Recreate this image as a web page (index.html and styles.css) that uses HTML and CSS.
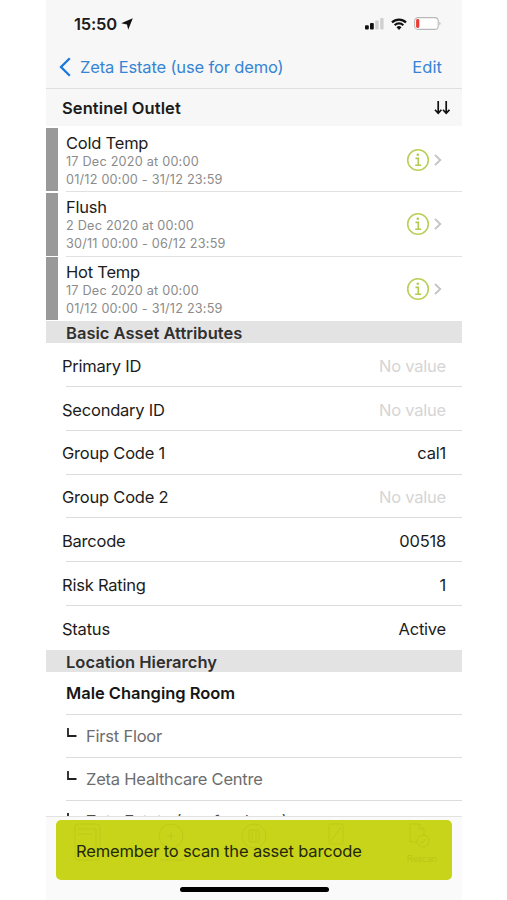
FILE: index.html
```html
<!DOCTYPE html>
<html lang="en">
<head>
<meta charset="utf-8">
<meta name="viewport" content="width=device-width">
<title>Sentinel Outlet</title>
<link rel="stylesheet" href="styles.css">
</head>
<body>
<svg class="defs" aria-hidden="true">
  <symbol id="info" viewBox="0 0 24 24"><circle cx="12" cy="12" r="10.3" fill="none" stroke="#b9d05a" stroke-width="1.6"/><circle cx="11.8" cy="6.8" r="1.3" fill="#b2ca50"/><path d="M9.5 10.4h2.8v6.7M9.2 17.2h6" fill="none" stroke="#b2ca50" stroke-width="1.6"/></symbol>
  <symbol id="chevron" viewBox="0 0 8 12"><path d="M1 1l5.3 5L1 11" fill="none" stroke="#c4c4c6" stroke-width="1.8"/></symbol>
  <symbol id="branch" viewBox="0 0 10 10"><path d="M1 0v8H9.5" fill="none" stroke="#222" stroke-width="1.8"/></symbol>
</svg>
<main class="phone">
  <header class="top">
    <div class="status">
      <span class="clock">15:50</span>
      <svg class="locate" viewBox="0 0 12 12"><path d="M11.8.2L7.2 11.8 6 6.4.2 5.2z" fill="#111"/></svg>
      <div class="signals">
        <svg width="19" height="13" viewBox="0 0 19 13"><rect x="0" y="8.2" width="3.8" height="4.3" rx="1" fill="#111"/><rect x="5" y="6" width="3.8" height="6.5" rx="1" fill="#111"/><rect x="10.2" y="3.4" width="3.4" height="9.1" rx="1" fill="#d0d0d0"/><rect x="15.2" y="1" width="3.4" height="11.5" rx="1" fill="#d0d0d0"/></svg>
        <svg width="16" height="12" viewBox="0 0 16 12"><path d="M1 4.4a10 10 0 0 1 14 0M3.7 7.2a6.2 6.2 0 0 1 8.6 0" fill="none" stroke="#111" stroke-width="2.2"/><path d="M5.5 9.3a3.6 3.6 0 0 1 5 0L8 12z" fill="#111"/></svg>
        <svg width="27" height="13" viewBox="0 0 27 13"><rect x=".6" y=".6" width="23.6" height="11.8" rx="3.4" fill="#fff" stroke="#b9b9b9" stroke-width="1.1"/><rect x="2.1" y="2" width="3.2" height="9" rx="1.4" fill="#ee3b32"/><path d="M25.5 4.4q1.8 2.1 0 4.2z" fill="#aaa"/></svg>
      </div>
    </div>
    <nav class="nav">
      <svg class="back" viewBox="0 0 12 20"><path d="M10.8 1.2L2 10l8.8 8.8" fill="none" stroke="#1878dd" stroke-width="2.3"/></svg>
      <span class="crumb">Zeta Estate (use for demo)</span>
      <span class="edit">Edit</span>
    </nav>
  </header>
  <div class="title">
    <h1>Sentinel Outlet</h1>
    <svg class="sort" viewBox="0 0 16 14"><path d="M4.2 0v12M1 8.8l3.2 3.5 3.2-3.5M12.2 0v12M9 8.8l3.2 3.5 3.2-3.5" fill="none" stroke="#111" stroke-width="1.7"/></svg>
  </div>
  <section class="tasks">
    <article class="task"><div class="task-body"><div class="task-text"><h2>Cold Temp</h2><p>17 Dec 2020 at 00:00</p><p>01/12 00:00 - 31/12 23:59</p></div><svg class="info"><use href="#info"/></svg><svg class="chev"><use href="#chevron"/></svg></div></article>
    <article class="task"><div class="task-body"><div class="task-text"><h2>Flush</h2><p>2 Dec 2020 at 00:00</p><p>30/11 00:00 - 06/12 23:59</p></div><svg class="info"><use href="#info"/></svg><svg class="chev"><use href="#chevron"/></svg></div></article>
    <article class="task"><div class="task-body"><div class="task-text"><h2>Hot Temp</h2><p>17 Dec 2020 at 00:00</p><p>01/12 00:00 - 31/12 23:59</p></div><svg class="info"><use href="#info"/></svg><svg class="chev"><use href="#chevron"/></svg></div></article>
  </section>
  <h3 class="section">Basic Asset Attributes</h3>
  <dl class="attrs">
    <div class="attr"><dt>Primary ID</dt><dd class="empty">No value</dd></div>
    <div class="attr"><dt>Secondary ID</dt><dd class="empty">No value</dd></div>
    <div class="attr"><dt>Group Code 1</dt><dd>cal1</dd></div>
    <div class="attr"><dt>Group Code 2</dt><dd class="empty">No value</dd></div>
    <div class="attr"><dt>Barcode</dt><dd>00518</dd></div>
    <div class="attr"><dt>Risk Rating</dt><dd>1</dd></div>
    <div class="attr"><dt>Status</dt><dd>Active</dd></div>
  </dl>
  <h3 class="section location">Location Hierarchy</h3>
  <div class="places">
    <div class="place current">Male Changing Room</div>
    <div class="place"><svg class="branch"><use href="#branch"/></svg>First Floor</div>
    <div class="place"><svg class="branch"><use href="#branch"/></svg>Zeta Healthcare Centre</div>
    <div class="place"><svg class="branch"><use href="#branch"/></svg>Zeta Estate (use for demo)</div>
  </div>
  <footer class="dock">
    <div class="toast">
      <svg class="ghosts" viewBox="0 0 396 60" fill="none" stroke="#a5b016" stroke-opacity=".3"><rect x="19" y="4" width="25" height="36" rx="3"/><path d="M22 9h18v18M22 14h14"/><circle cx="115" cy="16" r="12"/><path d="M111 16h8M115 12v8M104 40h24"/><circle cx="198" cy="16" r="12"/><path d="M193 10h10v12h-10zM196 10v12M200 10v12"/><rect x="273" y="4" width="14" height="20" rx="2"/><path d="M275 21l10-14"/><path d="M354 22V4h9l5 5v7M354 22h7M363 4v5h5"/><circle cx="367" cy="21" r="6"/><path d="M364 21l2 2 4-4"/></svg>
      <span class="rescan">Rescan</span>
      <span class="message">Remember to scan the asset barcode</span>
    </div>
    <div class="home"></div>
  </footer>
</main>
</body>
</html>
```

FILE: styles.css
```css
* { box-sizing: border-box; }
body { margin: 0; background: #fff; font-family: Inter, "Liberation Sans", sans-serif; font-size: 16.5px; letter-spacing: -0.22px; color: #1c1c1c; }
h1, h2, h3, p, dl, dd { margin: 0; }
svg { display: block; flex: none; }
.defs { position: absolute; width: 0; height: 0; }
.phone { position: relative; width: 416px; height: 900px; margin-left: 46px; overflow: hidden; white-space: nowrap; }
.top { height: 89px; background: #f7f7f7; border-bottom: 1px solid #dfdfdf; }
.status { height: 45px; display: flex; align-items: center; padding: 2px 21px 0 28px; }
.clock { font-size: 16.5px; font-weight: 600; letter-spacing: -0.2px; }
.locate { width: 12px; height: 12px; margin-left: 4px; }
.signals { margin-left: auto; display: flex; align-items: center; gap: 7px; }
.nav { height: 43px; display: flex; align-items: center; padding: 0 20px 0 13px; color: #3684d4; letter-spacing: -0.15px; }
.back { width: 12px; height: 20px; margin-right: 9px; }
.edit { margin-left: auto; letter-spacing: 0.1px; }
.title { height: 37px; display: flex; align-items: center; justify-content: space-between; padding: 0 12px 0 16px; background: #f7f7f7; }
.title h1 { font-size: 16.5px; font-weight: 600; letter-spacing: 0.08px; }
.sort { width: 16px; height: 14px; }
.tasks { height: 195px; padding-top: 2px; }
.task { height: 64.5px; display: flex; }
.task::before { content: ""; width: 12px; height: 63px; background: #999; }
.task-body { flex: 1; margin-left: 8px; display: flex; align-items: center; padding-right: 20px; height: 64px; border-bottom: 1px solid #e1e1e1; }
.task:last-child .task-body { border-color: transparent; }
.task-text { flex: 1; padding-top: 1px; }
.task h2 { font-size: 16.5px; line-height: 21px; font-weight: 400; padding-top: 1px; margin-bottom: -1px; }
.task p { font-size: 12.7px; line-height: 18px; letter-spacing: 0.2px; color: #8b8b8b; }
.info { width: 24px; height: 24px; margin-right: 4px; }
.chev { width: 8px; height: 12px; }
.section { height: 22px; line-height: 24px; padding-left: 20px; background: #e3e3e3; font-size: 16.5px; font-weight: 600; color: #303030; letter-spacing: 0.02px; }
.attr { height: 43.85px; display: flex; align-items: center; justify-content: space-between; padding: 1.5px 16px 0; background: linear-gradient(#dcdcdc, #dcdcdc) 20px 100% / 100% 1px no-repeat; }
.attr:last-child { background: none; }
.empty { color: #d5d5d5; }
.place { height: 43px; display: flex; align-items: center; margin-left: 20px; border-bottom: 1px solid #dcdcdc; color: #6d6d6d; }
.place:last-child { padding-bottom: 1px; color: #4d4d4d; }
.current { font-weight: 600; color: #161616; letter-spacing: -0.02px; }
.branch { width: 10px; height: 10px; margin: -6px 9px 0 1px; }
.dock { position: absolute; left: 0; right: 0; bottom: 0; height: 84px; padding: 3px 10px 0; background: #fafafa; border-top: 1px solid #e2e2e2; }
.toast { position: relative; height: 60px; display: flex; align-items: center; padding: 1px 0 0 20px; border-radius: 5px; background: #c8d419; color: #242808; letter-spacing: -0.16px; }
.ghosts { position: absolute; left: 0; top: 0; width: 396px; height: 60px; }
.rescan { position: absolute; right: 15px; top: 33px; font-size: 9px; line-height: 12px; color: #bac617; }
.message { position: relative; }
.home { width: 149px; height: 5px; margin: 7px auto 0; border-radius: 3px; background: #000; }
```
